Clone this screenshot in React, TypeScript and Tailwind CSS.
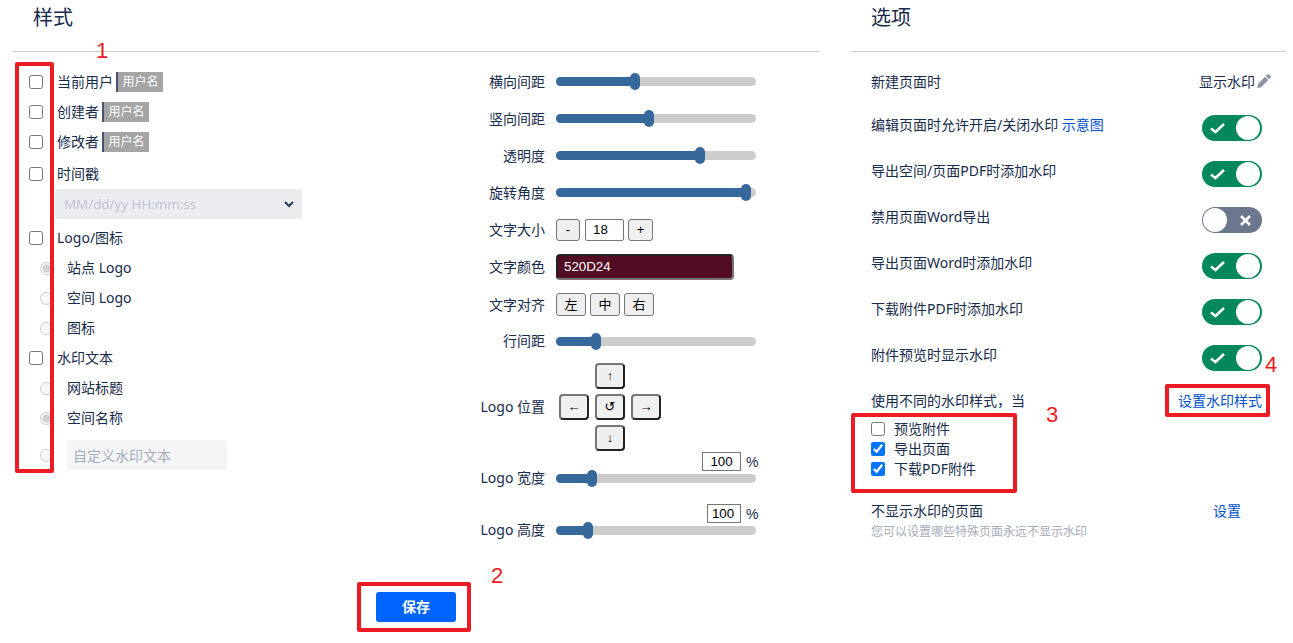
import React from "react";

const Check = ({ label, badge }: { label: string; badge?: boolean }) => (
  <label className="flex h-[30px] items-center pl-4">
    <input type="checkbox" readOnly className="m-0 h-[14px] w-[14px]" />
    <span className="ml-[14px]">{label}</span>
    {badge && (
      <span className="ml-[3px] flex h-5 w-[47px] items-center justify-center border-l-2 border-[#44546f] bg-[#a5a5a5] text-[12px] text-white">
        用户名
      </span>
    )}
  </label>
);

const Radio = ({ label, checked }: { label: string; checked?: boolean }) => (
  <label className="flex h-[30px] items-center">
    <input type="radio" disabled checked={!!checked} readOnly className="m-0 ml-[27px] h-[13px] w-[13px]" />
    <span className="ml-[14px]">{label}</span>
  </label>
);

const Slider = ({ at }: { at: number }) => (
  <div className="relative h-[9px] w-[200px] rounded-full bg-[#cccccc]">
    <div className="h-[9px] rounded-full bg-[#36689b]" style={{ width: at + 5 }} />
    <div className="absolute top-[-4px] h-[17px] w-[10px] rounded-full bg-[#36689b]" style={{ left: at - 5 }} />
  </div>
);

const Label = ({ children, up }: { children: React.ReactNode; up?: boolean }) => (
  <div className={`mr-[11px] w-[82px] whitespace-nowrap text-right ${up ? "-mt-[2px]" : ""}`}>{children}</div>
);

const SliderRow = ({ label, at, h }: { label: string; at: number; h: string }) => (
  <div className={`flex items-center ${h}`}>
    <Label>{label}</Label>
    <Slider at={at} />
  </div>
);

const btn =
  "flex items-center justify-center rounded-[3px] border border-[#767676] bg-[#efefef] text-[13px] text-black font-['Liberation_Sans','Noto_Sans_CJK_SC',sans-serif]";

const arrow =
  "flex h-[26px] w-[30px] items-center justify-center rounded-[4px] border-2 border-t-[#767676] border-l-[#767676] border-r-[#222222] border-b-[#222222] bg-[#efefef] text-[13px] text-black font-['Liberation_Sans','DejaVu_Sans',sans-serif]";

const Toggle = ({ on = true }: { on?: boolean }) =>
  on ? (
    <div className="mt-[6px] flex h-[26px] w-[60px] items-center justify-between rounded-full bg-[#00875a] pl-2 pr-[2px]">
      <svg width="15" height="12" viewBox="0 0 15 12" fill="none" stroke="white" strokeWidth="2.6">
        <path d="M1 6.5 L5.5 10 L14 2" />
      </svg>
      <div className="h-[24px] w-[24px] rounded-full bg-white" />
    </div>
  ) : (
    <div className="mt-[6px] flex h-[26px] w-[60px] items-center justify-between rounded-full bg-[#6b778c] pl-[1px] pr-[11px]">
      <div className="h-[24px] w-[24px] rounded-full bg-white" />
      <svg width="11" height="11" viewBox="0 0 11 11" fill="none" stroke="white" strokeWidth="2.6">
        <path d="M1 1 L10 10 M10 1 L1 10" />
      </svg>
    </div>
  );

const ToggleRow = ({ children, on, cls = "h-[46px]" }: { children: React.ReactNode; on?: boolean; cls?: string }) => (
  <div className={`flex items-center justify-between ${cls}`}>
    <div>{children}</div>
    <Toggle on={on} />
  </div>
);

const SmallCheck = ({ label, checked }: { label: string; checked?: boolean }) => (
  <label className="flex h-5 items-center">
    <input type="checkbox" checked={!!checked} readOnly className="m-0 h-[14px] w-[14px]" />
    <span className="ml-[9px]">{label}</span>
  </label>
);

const Box = ({ cls }: { cls: string }) => (
  <div className={`pointer-events-none absolute rounded-[2px] border-4 border-[#ed1c24] ${cls}`} />
);

const Num = ({ n, cls }: { n: string; cls: string }) => (
  <div className={`absolute text-[22px] leading-none text-[#ed1c24] font-['Liberation_Sans',sans-serif] ${cls}`}>{n}</div>
);

export default function App() {
  return (
    <div className="relative flex h-[643px] w-[1293px] overflow-hidden bg-white pl-[13px] text-[14px] leading-5 text-[#172b4d] font-['Noto_Sans','Noto_Sans_CJK_SC',sans-serif]">
      {/* Style section */}
      <div className="w-[806px]">
        <div className="h-[52px] border-b border-[#cccccc] pl-5 pt-[4px] text-[20px] leading-7">样式</div>
        <div className="flex">
          <div className="w-[450px] pt-[15px]">
            <Check label="当前用户" badge />
            <Check label="创建者" badge />
            <Check label="修改者" badge />
            <div className="mt-[2px]">
              <Check label="时间戳" />
            </div>
            <div className="ml-[42px] flex h-[30px] w-[247px] items-center justify-between rounded-[3px] bg-[#ebecf0] pl-[9px] pr-2 text-[13.33px] text-[#c1c7d0]">
              <span>MM/dd/yy HH:mm:ss</span>
              <svg width="10" height="7" viewBox="0 0 10 7" fill="none" stroke="#253858" strokeWidth="2">
                <path d="M1 1 L5 5 L9 1" />
              </svg>
            </div>
            <div className="mt-1">
              <Check label="Logo/图标" />
            </div>
            <Radio label="站点 Logo" checked />
            <Radio label="空间 Logo" />
            <Radio label="图标" />
            <Check label="水印文本" />
            <Radio label="网站标题" />
            <Radio label="空间名称" checked />
            <div className="mt-[7px] flex h-[30px] items-center">
              <input type="radio" disabled readOnly className="m-0 ml-[27px] h-[13px] w-[13px]" />
              <div className="ml-[14px] flex h-[30px] w-[160px] items-center rounded-[3px] bg-[#f4f5f7] pl-[6px] pt-[2px] text-[#a5adba]">
                自定义水印文本
              </div>
            </div>
          </div>

          <div className="pt-[11px]">
            <SliderRow label="横向间距" at={79} h="h-[37px]" />
            <SliderRow label="竖向间距" at={93} h="h-[37px]" />
            <SliderRow label="透明度" at={144} h="h-[37px]" />
            <SliderRow label="旋转角度" at={190} h="h-[37px]" />
            <div className="flex h-[37px] items-center">
              <Label>文字大小</Label>
              <button className={`${btn} h-[22px] w-6`}>-</button>
              <div className="ml-[5px] flex h-[22px] w-[39px] items-center rounded-[2px] border border-[#767676] pl-[7px] text-[13.33px] text-black font-['Liberation_Sans',sans-serif]">
                18
              </div>
              <button className={`${btn} ml-1 h-[22px] w-[25px]`}>+</button>
            </div>
            <div className="flex h-[38px] items-center">
              <Label>文字颜色</Label>
              <div className="flex h-[26px] w-[178px] items-center rounded-[4px] border-2 border-t-[#222222] border-l-[#222222] border-r-[#767676] border-b-[#767676] bg-[#520d24] pl-[6px] text-[13.33px] text-white font-['Liberation_Sans',sans-serif]">
                520D24
              </div>
            </div>
            <div className="flex h-[37px] items-center">
              <Label>文字对齐</Label>
              <button className={`${btn} h-[23px] w-[30px]`}>左</button>
              <button className={`${btn} ml-1 h-[23px] w-[30px]`}>中</button>
              <button className={`${btn} ml-1 h-[23px] w-[30px]`}>右</button>
            </div>
            <SliderRow label="行间距" at={40} h="h-[36px]" />
            <div className="mt-[4px] flex items-center">
              <Label>Logo 位置</Label>
              <div className="ml-[3px] grid grid-cols-[30px_30px_30px] grid-rows-[26px_26px_26px] gap-x-[6px] gap-y-[5px]">
                <div />
                <button className={arrow}>↑</button>
                <div />
                <button className={arrow}>←</button>
                <button className={arrow}>↺</button>
                <button className={arrow}>→</button>
                <div />
                <button className={arrow}>↓</button>
                <div />
              </div>
            </div>
            <div className="mt-px flex h-[19px] w-[293px] items-center justify-end">
              <div className="flex h-[19px] w-[39px] items-center justify-center border border-[#767676] text-[13.33px] text-black font-['Liberation_Sans',sans-serif]">
                100
              </div>
              <span className="ml-[5px] w-[10px] font-['Liberation_Sans',sans-serif]">%</span>
            </div>
            <div className="mt-[3px] flex h-[9px] items-center">
              <Label up>Logo 宽度</Label>
              <Slider at={36} />
            </div>
            <div className="mt-[21px] flex h-[19px] w-[293px] items-center justify-end">
              <div className="flex h-[19px] w-[34px] items-center justify-center border border-[#767676] pr-[2px] text-[13.33px] text-black font-['Liberation_Sans',sans-serif]">
                100
              </div>
              <span className="ml-[5px] w-[10px] font-['Liberation_Sans',sans-serif]">%</span>
            </div>
            <div className="mt-[3px] flex h-[9px] items-center">
              <Label up>Logo 高度</Label>
              <Slider at={32} />
            </div>
          </div>
        </div>
        <div className="mt-[57px] flex justify-center">
          <button className="h-[30px] w-20 rounded-[3px] bg-[#0065ff] text-[14px] font-bold text-white">保存</button>
        </div>
      </div>

      {/* Options section */}
      <div className="ml-8 w-[435px]">
        <div className="h-[52px] border-b border-[#cccccc] pl-5 pt-[4px] text-[20px] leading-7">选项</div>
        <div className="pl-5 pr-6">
          <div className="mt-[15px] flex h-[30px] items-center justify-between">
            <span>新建页面时</span>
            <span className="-mr-[10px] flex items-center">
              显示水印
              <svg width="16" height="16" viewBox="0 0 16 16" fill="#8993a4" className="ml-px -mt-[2px]">
                <path d="M11.2 1.6 a1.2 1.2 0 0 1 1.7 0 l1.6 1.6 a1.2 1.2 0 0 1 0 1.7 L13.2 6.2 L9.9 2.9 Z M9 3.8 L12.3 7.1 L5.2 14.2 L1.2 15 L2 11 Z" />
              </svg>
            </span>
          </div>
          <div className="mt-[5px]">
            <ToggleRow>
              编辑页面时允许开启/关闭水印 <span className="text-[#0052cc]">示意图</span>
            </ToggleRow>
          </div>
          <ToggleRow>导出空间/页面PDF时添加水印</ToggleRow>
          <ToggleRow on={false}>禁用页面Word导出</ToggleRow>
          <ToggleRow>导出页面Word时添加水印</ToggleRow>
          <ToggleRow>下载附件PDF时添加水印</ToggleRow>
          <ToggleRow>附件预览时显示水印</ToggleRow>
          <div className="mt-[6px] flex h-[34px] items-center justify-between">
            <span>使用不同的水印样式，当</span>
            <span className="text-[#0052cc]">设置水印样式</span>
          </div>
          <div className="mt-px">
            <SmallCheck label="预览附件" />
            <SmallCheck label="导出页面" checked />
            <SmallCheck label="下载PDF附件" checked />
          </div>
          <div className="mt-[22px] flex h-5 items-center justify-between">
            <span>不显示水印的页面</span>
            <span className="mr-[21px] text-[#0052cc]">设置</span>
          </div>
          <div className="mt-px text-[12px] text-[#a5adba]">您可以设置哪些特殊页面永远不显示水印</div>
        </div>
      </div>

      {/* Annotations */}
      <Box cls="left-[15px] top-[62px] h-[411px] w-[39px]" />
      <Box cls="left-[357px] top-[582px] h-[50px] w-[114px]" />
      <Box cls="left-[851px] top-[413px] h-[80px] w-[166px]" />
      <Box cls="left-[1165px] top-[384px] h-[33px] w-[105px]" />
      <Num n="1" cls="left-[96px] top-[40px]" />
      <Num n="2" cls="left-[491px] top-[565px]" />
      <Num n="3" cls="left-[1046px] top-[404px]" />
      <Num n="4" cls="left-[1265px] top-[354px]" />
    </div>
  );
}
